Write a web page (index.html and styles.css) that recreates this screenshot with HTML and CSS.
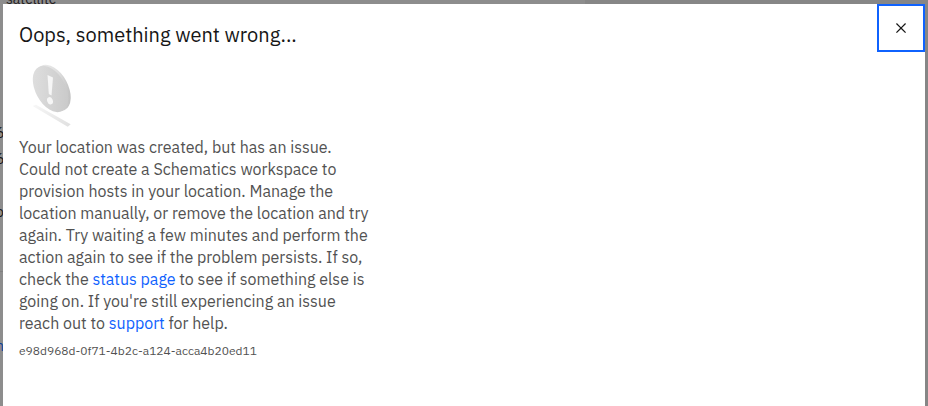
FILE: index.html
```html
<!DOCTYPE html>
<html lang="en">
<head>
<meta charset="utf-8">
<title>Oops, something went wrong...</title>
<link rel="stylesheet" href="styles.css">
</head>
<body>
<div class="page" aria-hidden="true">
  <span class="page-name">satellite</span>
  <span class="edge edge-id-a">6</span>
  <span class="edge edge-id-b">6</span>
  <span class="edge edge-label">o</span>
  <span class="edge edge-rule"></span>
  <span class="edge edge-link">n</span>
</div>
<main class="modal" role="dialog" aria-labelledby="title">
  <header class="modal-header">
    <h1 class="title" id="title">Oops, something went wrong...</h1>
    <button class="close" type="button" aria-label="Close">
      <svg width="20" height="20" viewBox="0 0 32 32" aria-hidden="true"><path fill="currentColor" d="M24 9.4 22.6 8 16 14.6 9.4 8 8 9.4l6.600 6.600L8 22.600 9.400 24l6.600-6.600 6.600 6.600 1.400-1.400-6.600-6.600z"/></svg>
    </button>
  </header>
  <div class="content">
    <svg class="art" width="64" height="68" viewBox="0 0 64 68" aria-hidden="true">
      <defs>
        <linearGradient id="face" x1="0" y1="0" x2="1" y2="1"><stop offset="0" stop-color="#e2e2e2"/><stop offset="1" stop-color="#c6c6c6"/></linearGradient>
        <linearGradient id="rim" x1="0" y1="0" x2="1" y2="1"><stop offset="0" stop-color="#f2f2f2"/><stop offset=".6" stop-color="#dedede"/><stop offset="1" stop-color="#b0b0b0"/></linearGradient>
        <linearGradient id="shade" x1="0" y1="0" x2="1" y2="1"><stop offset="0" stop-color="#f7f7f7"/><stop offset="1" stop-color="#e0e0e0"/></linearGradient>
      </defs>
      <path fill="url(#shade)" d="M13.700 46l3.300-1.300 34.700 19.600-3 2.400z"/>
      <ellipse cx="34" cy="28" rx="15" ry="25" transform="rotate(-28 34 28)" fill="url(#rim)"/>
      <ellipse cx="31.500" cy="29" rx="15" ry="25" transform="rotate(-28 31.500 29)" fill="url(#face)"/>
      <path fill="#f6f6f6" d="M28.500 15l5.500 2.500-1.500 18-2.700-1.500z"/>
      <ellipse cx="31" cy="40.700" rx="2.800" ry="3.800" transform="rotate(-20 31 40.700)" fill="#f6f6f6"/>
    </svg>
    <p class="message">Your location was created, but has an issue. Could not create a Schematics workspace to provision hosts in your location. Manage the location manually, or remove the location and try again. Try waiting a few minutes and perform the action again to see if the problem persists. If so, check the <a class="link" href="#status">status page</a> to see if something else is going on. If you're still experiencing an issue reach out to <a class="link" href="#support">support</a> for help.</p>
    <p class="request-id">e98d968d-0f71-4b2c-a124-acca4b20ed11</p>
  </div>
</main>
</body>
</html>
```
FILE: styles.css
```css
* { box-sizing: border-box; }
html, body { height: 100%; }
body {
  margin: 0;
  padding: 4px 3px 0;
  background: #868686;
  color: #161616;
  font-family: "IBM Plex Sans", Roboto, sans-serif;
  overflow: hidden;
}
.page {
  position: absolute;
  inset: 0;
  overflow: hidden;
  background: linear-gradient(to right, #8d8d8d 63%, #868686 63%);
  font-size: 14px;
  line-height: 18px;
}
.page-name { position: absolute; left: 6px; top: -10px; color: #24201f; }
.edge { position: absolute; left: -4px; }
.edge-id-a { top: 124px; }
.edge-id-b { top: 150px; }
.edge-label { top: 203px; }
.edge-rule { top: 271px; left: 0; width: 3px; height: 1px; background: #808080; }
.edge-link { top: 337px; color: #0b3f9b; }
.modal {
  position: relative;
  min-height: 100%;
  background: #fff;
}
.modal-header {
  display: flex;
  justify-content: space-between;
  align-items: flex-start;
}
.title {
  margin: 0;
  padding: 18px 0 0 16px;
  font-size: 20px;
  line-height: 26px;
  font-weight: 400;
}
.close {
  display: flex;
  align-items: center;
  justify-content: center;
  width: 48px;
  height: 48px;
  padding: 0;
  border: 2px solid #0f62fe;
  background: transparent;
  color: #161616;
}
.content { padding: 8px 16px 0; }
.art { display: block; }
.message {
  max-width: 352px;
  margin: 8px 0 0;
  color: #525252;
  font-size: 16px;
  line-height: 22px;
}
.link { color: #0f62fe; text-decoration: none; }
.request-id {
  margin: 8px 0 0;
  color: #525252;
  font-size: 12px;
  line-height: 18px;
}
```
